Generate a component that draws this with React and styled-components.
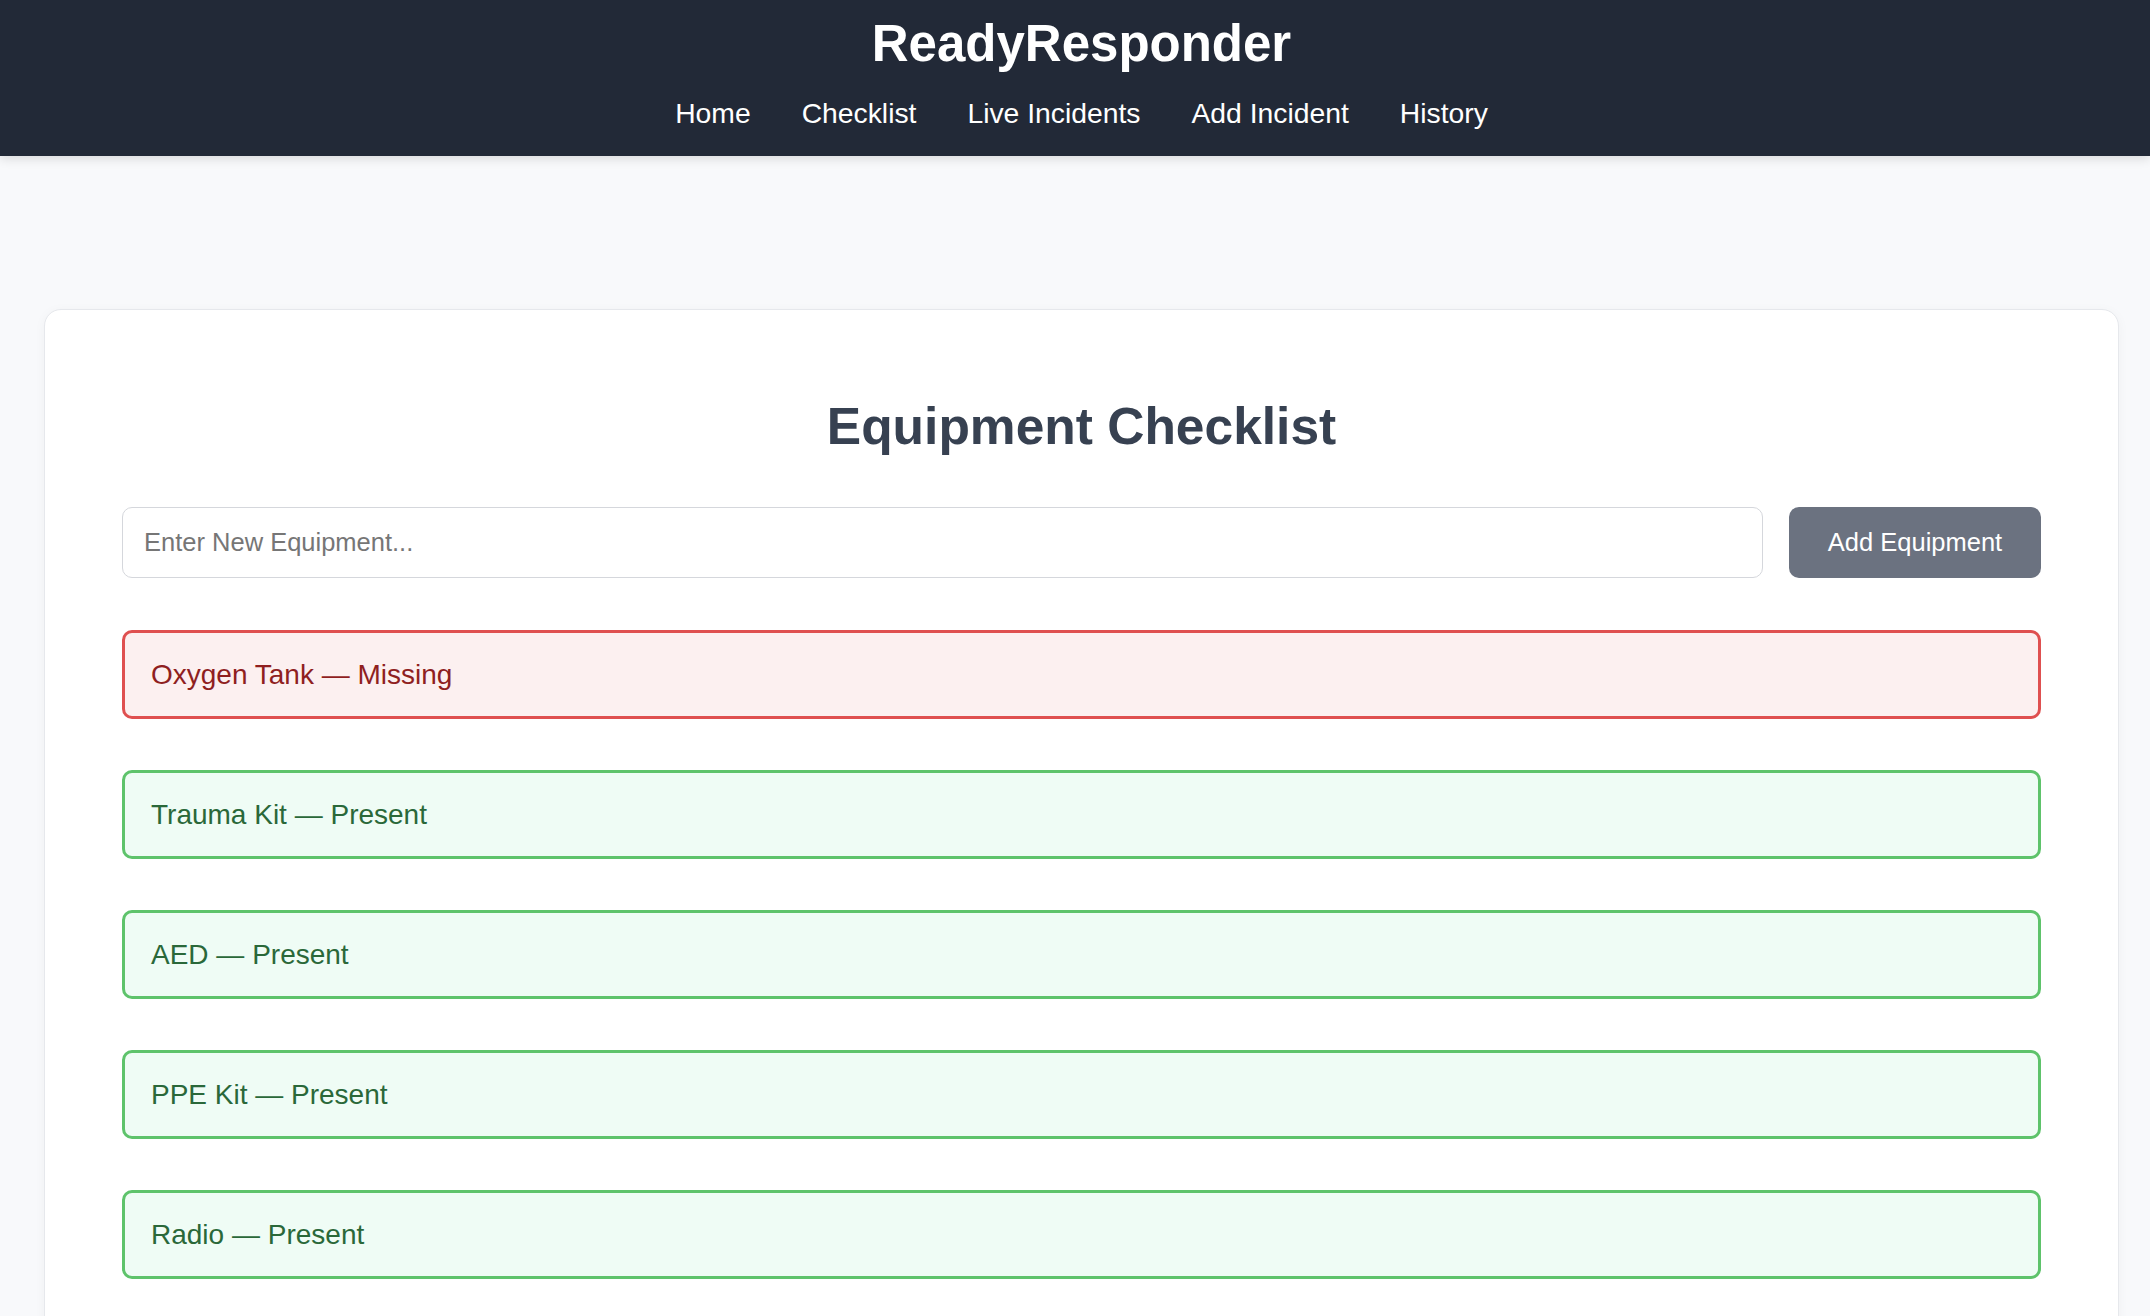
import { useState } from "react";
import styled, { createGlobalStyle } from "styled-components";

const GlobalStyle = createGlobalStyle`
  html, body {
    margin: 0;
    padding: 0;
    background: #f8f9fb;
    font-family: "Liberation Sans", Arial, Helvetica, sans-serif;
  }
`;

const Header = styled.header`
  background: #222937;
  color: #ffffff;
  padding: 14px 0 27px 13px;
  box-shadow: 0 3px 10px rgba(0, 0, 0, 0.12);
  display: flex;
  flex-direction: column;
  align-items: center;
  gap: 24px;
`;

const Brand = styled.h1`
  margin: 0;
  font-size: 51px;
  font-weight: bold;
  line-height: 59px;
`;

const Nav = styled.nav`
  display: flex;
  gap: 51px;
`;

const NavLink = styled.a`
  color: #ffffff;
  text-decoration: none;
  font-size: 28.3px;
  line-height: 32px;
  cursor: pointer;
`;

const Main = styled.main`
  padding: 153px 31px 0 44px;
`;

const Card = styled.section`
  background: #ffffff;
  border: 1px solid #e6e8ec;
  border-radius: 17px;
  box-shadow: 0 2px 12px rgba(0, 0, 0, 0.04);
  padding: 86px 77px 60px;
  min-height: 1000px;
`;

const Title = styled.h2`
  margin: 0 0 51px;
  text-align: center;
  font-size: 51.5px;
  line-height: 60px;
  font-weight: bold;
  color: #374151;
`;

const AddRow = styled.form`
  display: flex;
  gap: 26px;
  margin-bottom: 52px;
`;

const Input = styled.input`
  flex: 1;
  height: 71px;
  box-sizing: border-box;
  border: 1px solid #d5d7dc;
  border-radius: 10px;
  padding: 0 21px;
  font-family: inherit;
  font-size: 25.5px;
  color: #222;
  outline: none;

  &::placeholder {
    color: #767676;
  }
`;

const Button = styled.button`
  height: 71px;
  width: 252px;
  border: none;
  border-radius: 10px;
  background: #6b7280;
  color: #ffffff;
  font-family: inherit;
  font-size: 25.5px;
  cursor: pointer;
`;

const List = styled.ul`
  list-style: none;
  margin: 0;
  padding: 0;
  display: flex;
  flex-direction: column;
  gap: 51px;
`;

const Item = styled.li`
  box-sizing: border-box;
  height: 89px;
  display: flex;
  align-items: center;
  padding: 0 26px;
  border: 3px solid ${(p) => (p.$missing ? "#df5050" : "#5ec36b")};
  background: ${(p) => (p.$missing ? "#fcf0f0" : "#effcf5")};
  color: ${(p) => (p.$missing ? "#8f1f1f" : "#2a6839")};
  border-radius: 10px;
  font-size: 28px;
`;

const links = ["Home", "Checklist", "Live Incidents", "Add Incident", "History"];

const App = () => {
  const [items, setItems] = useState([
    { name: "Oxygen Tank", present: false },
    { name: "Trauma Kit", present: true },
    { name: "AED", present: true },
    { name: "PPE Kit", present: true },
    { name: "Radio", present: true },
  ]);
  const [value, setValue] = useState("");

  const handleSubmit = (e) => {
    e.preventDefault();
    if (!value.trim()) return;
    setItems([...items, { name: value.trim(), present: true }]);
    setValue("");
  };

  return (
    <>
      <GlobalStyle />
      <Header>
        <Brand>ReadyResponder</Brand>
        <Nav>
          {links.map((l) => (
            <NavLink key={l}>{l}</NavLink>
          ))}
        </Nav>
      </Header>
      <Main>
        <Card>
          <Title>Equipment Checklist</Title>
          <AddRow onSubmit={handleSubmit}>
            <Input
              placeholder="Enter New Equipment..."
              value={value}
              onChange={(e) => setValue(e.target.value)}
            />
            <Button type="submit">Add Equipment</Button>
          </AddRow>
          <List>
            {items.map((item) => (
              <Item key={item.name} $missing={!item.present}>
                {item.name} — {item.present ? "Present" : "Missing"}
              </Item>
            ))}
          </List>
        </Card>
      </Main>
    </>
  );
};

export default App;
